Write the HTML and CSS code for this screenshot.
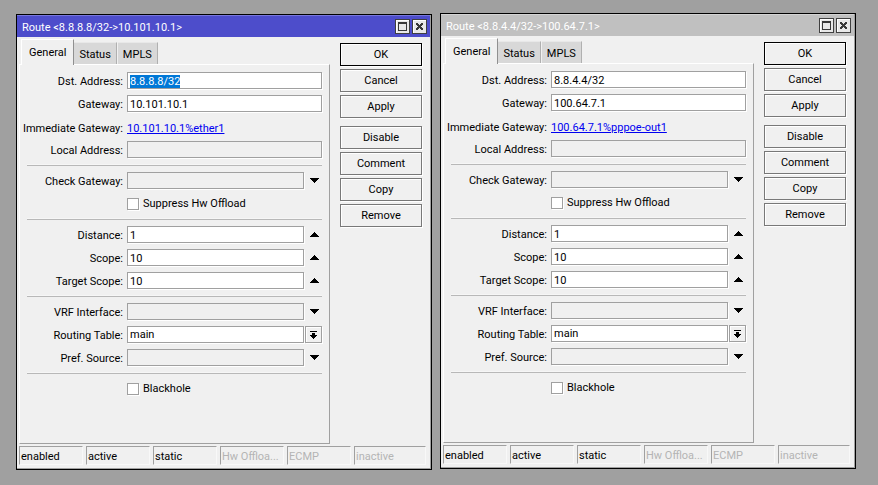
FILE: index.html
```html
<!DOCTYPE html>
<html lang="en">
<head>
    <meta charset="UTF-8">
    <meta name="viewport" content="width=device-width, initial-scale=1.0">
    <title>Routes</title>
    <link rel="stylesheet" href="styles.css">
</head>
<body>
    <svg class="sprite" width="0" height="0">
        <symbol id="i-down" viewBox="0 0 9 5"><path d="M0 0h9v1H0zM1 1h7v1H1zM2 2h5v1H2zM3 3h3v1H3zM4 4h1v1H4z"/></symbol>
        <symbol id="i-up" viewBox="0 0 9 5"><path d="M4 0h1v1H4zM3 1h3v1H3zM2 2h5v1H2zM1 3h7v1H1zM0 4h9v1H0z"/></symbol>
        <symbol id="i-pick" viewBox="0 0 7 9"><path d="M0 1h7v1H0zM2 3h3v2h2v1H6v1H5v1H4v1H3V8H2V7H1V6H0V5h2z"/></symbol>
        <symbol id="i-max" viewBox="0 0 9 9"><path fill-rule="evenodd" d="M0 0h9v9H0zM1 2v6h7V2z"/></symbol>
        <symbol id="i-close" viewBox="0 0 7 7"><path d="M0 0h2v1h1v1h1V1h1V0h2v2H6v1H5v1h1v1h1v2H5V6H4V5H3v1H2v1H0V5h1V4h1V3H1V2H0z"/></symbol>
    </svg>

    <div class="desktop">
        <section class="window active">
            <header class="titlebar">
                <h1>Route &lt;8.8.8.8/32-&gt;10.101.10.1&gt;</h1>
                <button type="button" aria-label="Maximize"><svg width="9" height="9"><use href="#i-max"/></svg></button>
                <button type="button" aria-label="Close"><svg width="7" height="7"><use href="#i-close"/></svg></button>
            </header>
            <form class="content">
                <div class="main">
                    <div class="tabs">
                        <button type="button" class="tab current">General</button>
                        <button type="button" class="tab">Status</button>
                        <button type="button" class="tab">MPLS</button>
                    </div>
                    <div class="panel">
                        <div class="row">
                            <label for="a-dst">Dst. Address:</label>
                            <input type="text" id="a-dst" value="8.8.8.8/32" autofocus>
                        </div>
                        <div class="row">
                            <label for="a-gw">Gateway:</label>
                            <input type="text" id="a-gw" value="10.101.10.1">
                        </div>
                        <div class="row link-row">
                            <span>Immediate Gateway:</span>
                            <a href="#">10.101.10.1%ether1</a>
                        </div>
                        <div class="row">
                            <label for="a-local">Local Address:</label>
                            <input type="text" id="a-local" class="empty" readonly>
                        </div>
                        <hr>
                        <div class="row">
                            <label for="a-check">Check Gateway:</label>
                            <div class="combo">
                                <select id="a-check" class="empty"><option></option></select>
                                <button type="button" aria-label="Show"><svg width="9" height="5"><use href="#i-down"/></svg></button>
                            </div>
                        </div>
                        <div class="row">
                            <label class="check"><input type="checkbox">Suppress Hw Offload</label>
                        </div>
                        <hr>
                        <div class="row">
                            <label for="a-distance">Distance:</label>
                            <div class="combo">
                                <input type="text" id="a-distance" value="1">
                                <button type="button" aria-label="Hide"><svg width="9" height="5"><use href="#i-up"/></svg></button>
                            </div>
                        </div>
                        <div class="row">
                            <label for="a-scope">Scope:</label>
                            <div class="combo">
                                <input type="text" id="a-scope" value="10">
                                <button type="button" aria-label="Hide"><svg width="9" height="5"><use href="#i-up"/></svg></button>
                            </div>
                        </div>
                        <div class="row">
                            <label for="a-target">Target Scope:</label>
                            <div class="combo">
                                <input type="text" id="a-target" value="10">
                                <button type="button" aria-label="Hide"><svg width="9" height="5"><use href="#i-up"/></svg></button>
                            </div>
                        </div>
                        <hr>
                        <div class="row">
                            <label for="a-vrf">VRF Interface:</label>
                            <div class="combo">
                                <select id="a-vrf" class="empty"><option></option></select>
                                <button type="button" aria-label="Show"><svg width="9" height="5"><use href="#i-down"/></svg></button>
                            </div>
                        </div>
                        <div class="row">
                            <label for="a-table">Routing Table:</label>
                            <div class="combo">
                                <select id="a-table"><option>main</option></select>
                                <button type="button" class="pick" aria-label="Choose"><svg width="7" height="9"><use href="#i-pick"/></svg></button>
                            </div>
                        </div>
                        <div class="row">
                            <label for="a-pref">Pref. Source:</label>
                            <div class="combo">
                                <select id="a-pref" class="empty"><option></option></select>
                                <button type="button" aria-label="Show"><svg width="9" height="5"><use href="#i-down"/></svg></button>
                            </div>
                        </div>
                        <hr>
                        <div class="row">
                            <label class="check"><input type="checkbox">Blackhole</label>
                        </div>
                    </div>
                </div>
                <div class="actions">
                    <button type="button" class="default">OK</button>
                    <button type="button">Cancel</button>
                    <button type="button">Apply</button>
                    <button type="button" class="second">Disable</button>
                    <button type="button">Comment</button>
                    <button type="button">Copy</button>
                    <button type="button">Remove</button>
                </div>
            </form>
            <footer class="status">
                <span>enabled</span>
                <span>active</span>
                <span>static</span>
                <span class="off">Hw Offloa...</span>
                <span class="off">ECMP</span>
                <span class="off">inactive</span>
            </footer>
        </section>

        <section class="window">
            <header class="titlebar">
                <h1>Route &lt;8.8.4.4/32-&gt;100.64.7.1&gt;</h1>
                <button type="button" aria-label="Maximize"><svg width="9" height="9"><use href="#i-max"/></svg></button>
                <button type="button" aria-label="Close"><svg width="7" height="7"><use href="#i-close"/></svg></button>
            </header>
            <form class="content">
                <div class="main">
                    <div class="tabs">
                        <button type="button" class="tab current">General</button>
                        <button type="button" class="tab">Status</button>
                        <button type="button" class="tab">MPLS</button>
                    </div>
                    <div class="panel">
                        <div class="row">
                            <label for="b-dst">Dst. Address:</label>
                            <input type="text" id="b-dst" value="8.8.4.4/32">
                        </div>
                        <div class="row">
                            <label for="b-gw">Gateway:</label>
                            <input type="text" id="b-gw" value="100.64.7.1">
                        </div>
                        <div class="row link-row">
                            <span>Immediate Gateway:</span>
                            <a href="#">100.64.7.1%pppoe-out1</a>
                        </div>
                        <div class="row">
                            <label for="b-local">Local Address:</label>
                            <input type="text" id="b-local" class="empty" readonly>
                        </div>
                        <hr>
                        <div class="row">
                            <label for="b-check">Check Gateway:</label>
                            <div class="combo">
                                <select id="b-check" class="empty"><option></option></select>
                                <button type="button" aria-label="Show"><svg width="9" height="5"><use href="#i-down"/></svg></button>
                            </div>
                        </div>
                        <div class="row">
                            <label class="check"><input type="checkbox">Suppress Hw Offload</label>
                        </div>
                        <hr>
                        <div class="row">
                            <label for="b-distance">Distance:</label>
                            <div class="combo">
                                <input type="text" id="b-distance" value="1">
                                <button type="button" aria-label="Hide"><svg width="9" height="5"><use href="#i-up"/></svg></button>
                            </div>
                        </div>
                        <div class="row">
                            <label for="b-scope">Scope:</label>
                            <div class="combo">
                                <input type="text" id="b-scope" value="10">
                                <button type="button" aria-label="Hide"><svg width="9" height="5"><use href="#i-up"/></svg></button>
                            </div>
                        </div>
                        <div class="row">
                            <label for="b-target">Target Scope:</label>
                            <div class="combo">
                                <input type="text" id="b-target" value="10">
                                <button type="button" aria-label="Hide"><svg width="9" height="5"><use href="#i-up"/></svg></button>
                            </div>
                        </div>
                        <hr>
                        <div class="row">
                            <label for="b-vrf">VRF Interface:</label>
                            <div class="combo">
                                <select id="b-vrf" class="empty"><option></option></select>
                                <button type="button" aria-label="Show"><svg width="9" height="5"><use href="#i-down"/></svg></button>
                            </div>
                        </div>
                        <div class="row">
                            <label for="b-table">Routing Table:</label>
                            <div class="combo">
                                <select id="b-table"><option>main</option></select>
                                <button type="button" class="pick" aria-label="Choose"><svg width="7" height="9"><use href="#i-pick"/></svg></button>
                            </div>
                        </div>
                        <div class="row">
                            <label for="b-pref">Pref. Source:</label>
                            <div class="combo">
                                <select id="b-pref" class="empty"><option></option></select>
                                <button type="button" aria-label="Show"><svg width="9" height="5"><use href="#i-down"/></svg></button>
                            </div>
                        </div>
                        <hr>
                        <div class="row">
                            <label class="check"><input type="checkbox">Blackhole</label>
                        </div>
                    </div>
                </div>
                <div class="actions">
                    <button type="button" class="default">OK</button>
                    <button type="button">Cancel</button>
                    <button type="button">Apply</button>
                    <button type="button" class="second">Disable</button>
                    <button type="button">Comment</button>
                    <button type="button">Copy</button>
                    <button type="button">Remove</button>
                </div>
            </form>
            <footer class="status">
                <span>enabled</span>
                <span>active</span>
                <span>static</span>
                <span class="off">Hw Offloa...</span>
                <span class="off">ECMP</span>
                <span class="off">inactive</span>
            </footer>
        </section>
    </div>

    <script>
        // the first field is ready to be overwritten
        const dst = document.getElementById('a-dst');
        dst.focus();
        dst.select();
    </script>
</body>
</html>
```
FILE: styles.css
```css
* {
    box-sizing: border-box;
}
body {
    margin: 0;
    background-color: #a0a0a0;
    font-family: Roboto, Arial, sans-serif;
    font-size: 11px;
    line-height: 14px;
    color: #000;
}
button, input, select {
    font: inherit;
    color: inherit;
    margin: 0;
    padding: 0;
    border-radius: 0;
    outline: none;
    appearance: none;
}
svg {
    display: block;
}
.sprite {
    position: absolute;
}
.desktop {
    display: flex;
    align-items: flex-start;
    gap: 8px;
    padding: 13px 22px 15px 16px;
}
.window {
    flex: 1;
    min-width: 0;
    background-color: #f0f0f0;
    border: 1px solid #000;
    box-shadow: inset -1px -1px #a0a0a0;
    padding: 0 1px 4px 0;
}
.window.active {
    margin-top: 1px;
}

/* title bar */
.titlebar {
    display: flex;
    align-items: center;
    gap: 2px;
    height: 22px;
    padding: 0 3px 0 5px;
    background-color: #c0c0c0;
    border-top: 1px solid #d4d4d4;
    color: #fff;
}
.active .titlebar {
    background-color: #4d4dcb;
    border-top-color: #7777dc;
}
.titlebar h1 {
    flex: 1;
    margin: 0;
    padding-top: 2px;
    font-size: 11px;
    font-weight: normal;
}
.titlebar button {
    display: flex;
    align-items: center;
    justify-content: center;
    width: 15px;
    height: 15px;
    background-color: #e8e8e8;
    border: 1px solid #404040;
    box-shadow: inset 1px 1px #fff;
    fill: #383838;
}

/* tabs and form */
.content {
    display: flex;
    gap: 10px;
    padding: 2px 8px 0 2px;
}
.main {
    flex: 1;
    min-width: 0;
}
.tabs {
    display: flex;
    align-items: flex-end;
    gap: 1px;
    height: 25px;
    padding-left: 2px;
}
.tab {
    height: 22px;
    padding: 2px 5px 0;
    background-color: #d8d8d8;
    border: 0;
    border-top: 1px solid #e8e8e8;
    border-right: 1px solid #b0b0b0;
}
.tab.current {
    position: relative;
    height: 26px;
    margin: 0 -1px -1px 0;
    padding: 0 7px;
    background-color: #f0f0f0;
    border-top: 1px solid #fff;
    border-left: 1px solid #fff;
    border-right: 1px solid #909090;
}
.panel {
    display: flex;
    flex-direction: column;
    gap: 6px;
    padding: 7px 7px 46px;
    border: 1px solid;
    border-color: #fff #a0a0a0 #a0a0a0 #fff;
}
.panel hr {
    width: 100%;
    height: 2px;
    margin: 0;
    border: 0;
    border-top: 1px solid #f6f6f6;
    border-bottom: 1px solid #b8b8b8;
}
.row {
    display: grid;
    grid-template-columns: 96px 1fr;
    column-gap: 4px;
    align-items: center;
    height: 17px;
    white-space: nowrap;
}
.row > label, .row > span {
    justify-self: end;
    padding-top: 2px;
}
.link-row {
    align-items: end;
    line-height: 12px;
}
.row a {
    color: #0000f0;
}
.row input[type="text"], .row select {
    width: 100%;
    min-width: 0;
    height: 17px;
    padding: 1px 2px 0;
    background-color: #fff;
    border: 1px solid #a0a0a0;
    box-shadow: 1px 1px #fff;
}
.row input.empty, .row select.empty {
    background-color: #f0f0f0;
}
.row input::selection {
    background-color: #0078d7;
    color: #fff;
}
.combo {
    display: flex;
    gap: 1px;
}
.combo button {
    flex: none;
    display: flex;
    align-items: center;
    justify-content: center;
    width: 17px;
    height: 17px;
    padding-left: 2px;
    background: none;
    border: 0;
}
.combo .pick {
    padding: 0;
    border: 1px solid #a0a0a0;
    box-shadow: 1px 1px #fff, inset 1px 1px #fff;
}
.row .check {
    grid-column: 2;
    justify-self: start;
    display: flex;
    align-items: center;
    gap: 4px;
    padding-top: 1px;
}
.check input {
    width: 12px;
    height: 12px;
    background-color: #fff;
    border: 1px solid #a0a0a0;
    box-shadow: 1px 1px #fff;
}
.check input:checked {
    background-color: #404040;
}

/* right column */
.actions {
    display: flex;
    flex-direction: column;
    gap: 3px;
    width: 82px;
    padding-top: 4px;
}
.actions button {
    height: 23px;
    padding-top: 1px;
    background-color: #f0f0f0;
    border: 1px solid #787878;
    box-shadow: 1px 1px #fff, inset 1px 1px #fff;
}
.actions .default {
    border-color: #000;
}
.actions .second {
    margin-top: 5px;
}

/* status bar */
.status {
    display: grid;
    grid-template-columns: repeat(5, 8fr) 9fr;
    gap: 3px;
    padding: 2px 4px 0 2px;
}
.status span {
    height: 19px;
    padding: 3px 1px 0;
    border: 1px solid;
    border-color: #a0a0a0 #f8f8f8 #f8f8f8 #a0a0a0;
    white-space: nowrap;
}
.status .off {
    color: #b4b4b4;
}
```
